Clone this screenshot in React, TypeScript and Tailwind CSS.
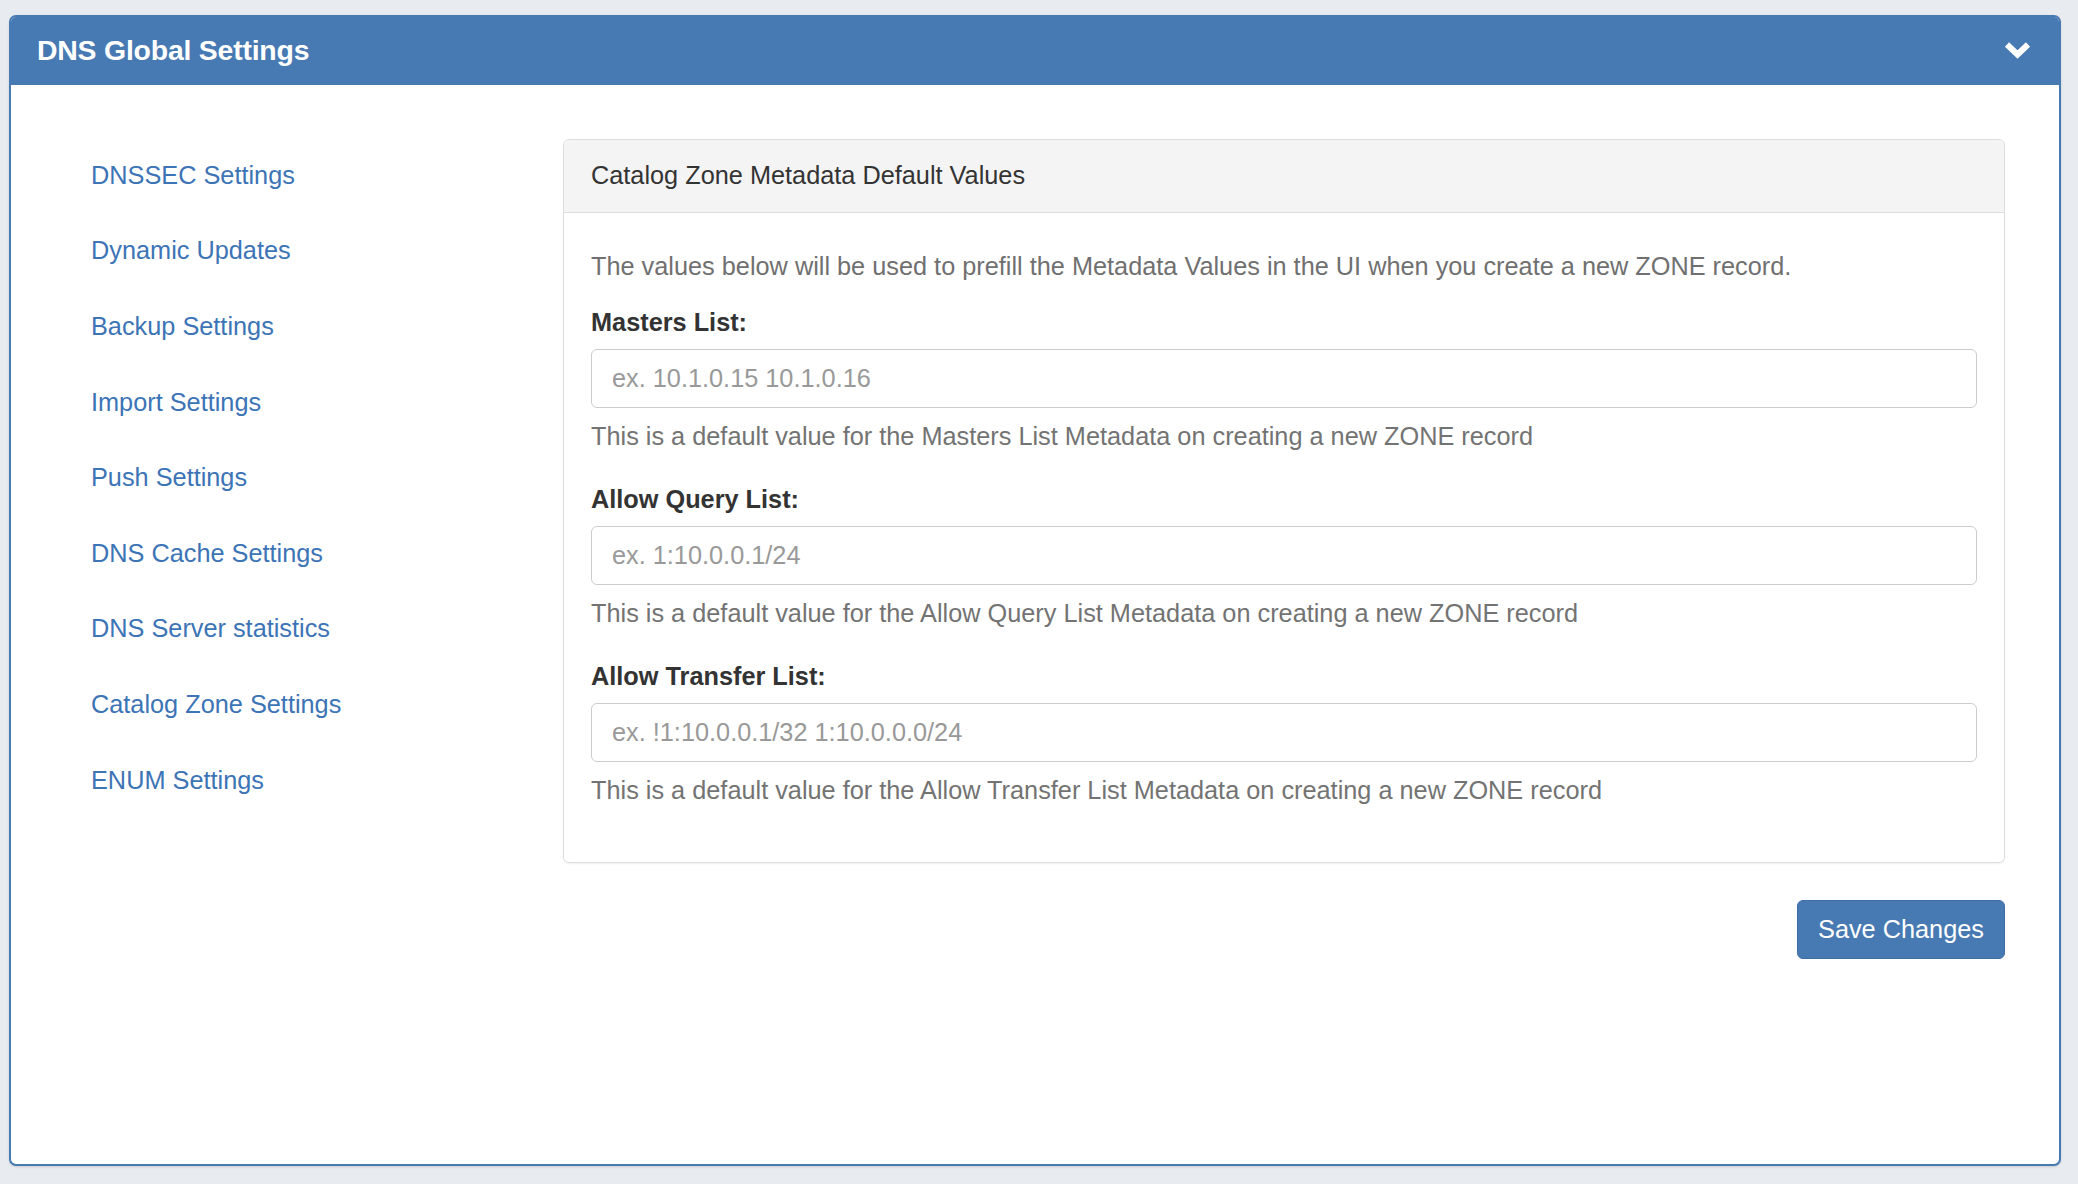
import { useState } from 'react';

const navItems = [
  'DNSSEC Settings',
  'Dynamic Updates',
  'Backup Settings',
  'Import Settings',
  'Push Settings',
  'DNS Cache Settings',
  'DNS Server statistics',
  'Catalog Zone Settings',
  'ENUM Settings',
];

const fields = [
  {
    label: 'Masters List:',
    placeholder: 'ex. 10.1.0.15 10.1.0.16',
    help: 'This is a default value for the Masters List Metadata on creating a new ZONE record',
  },
  {
    label: 'Allow Query List:',
    placeholder: 'ex. 1:10.0.0.1/24',
    help: 'This is a default value for the Allow Query List Metadata on creating a new ZONE record',
  },
  {
    label: 'Allow Transfer List:',
    placeholder: 'ex. !1:10.0.0.1/32 1:10.0.0.0/24',
    help: 'This is a default value for the Allow Transfer List Metadata on creating a new ZONE record',
  },
];

function Chevron() {
  return (
    <svg width="27" height="19" viewBox="0 0 27 19" fill="none">
      <polyline points="3,4.5 13.5,14.5 24,4.5" stroke="#ffffff" strokeWidth="6" strokeLinejoin="miter" />
    </svg>
  );
}

export default function App() {
  const [values, setValues] = useState<string[]>(['', '', '']);

  return (
    <div
      className="h-screen w-full bg-[#e8ecf0] pl-[9px] pt-[15px] pr-[17px] pb-[18px] flex"
      style={{ fontFamily: '"Liberation Sans", Arial, sans-serif' }}
    >
      <div className="flex-1 flex flex-col bg-white border-2 border-[#4779b2] rounded-[7px] overflow-hidden shadow-sm">
        {/* panel header */}
        <div className="h-[68px] shrink-0 bg-[#4779b2] flex items-center justify-between pl-[26px] pr-[28px]">
          <h1 className="text-[28.4px] font-bold text-white tracking-[-0.2px] -mt-[1px]">DNS Global Settings</h1>
          <button className="flex items-center -mt-[4px]">
            <Chevron />
          </button>
        </div>

        {/* panel body */}
        <div className="flex-1 flex pl-[80px] pr-[54px] pt-[53px]">
          <nav className="w-[472px] shrink-0 flex flex-col">
            {navItems.map((item) => (
              <a
                key={item}
                href="#"
                className="h-[75.6px] flex items-center text-[25.3px] text-[#3c74b6] hover:underline"
              >
                {item}
              </a>
            ))}
          </nav>

          <div className="flex-1 flex flex-col pt-[1px]">
            <div className="border border-[#dddddd] rounded-[6px] shadow-[0_1px_2px_rgba(0,0,0,0.06)]">
              <div className="h-[73px] bg-[#f4f4f4] border-b border-[#dddddd] rounded-t-[6px] flex items-center px-[27px] text-[25.3px] text-[#333333]">
                Catalog Zone Metadata Default Values
              </div>
              <div className="px-[27px] pt-[36px] pb-[55px]">
                <p className="leading-[34px] text-[25.3px] text-[#707070] mb-[22px]">
                  The values below will be used to prefill the Metadata Values in the UI when you create a new ZONE record.
                </p>
                {fields.map((f, i) => (
                  <div key={f.label} className={i < fields.length - 1 ? 'mb-[29px]' : ''}>
                    <label className="block leading-[34px] text-[25.3px] font-bold text-[#333333] mb-[10px]">
                      {f.label}
                    </label>
                    <input
                      type="text"
                      value={values[i]}
                      onChange={(e) => {
                        const next = [...values];
                        next[i] = e.target.value;
                        setValues(next);
                      }}
                      placeholder={f.placeholder}
                      className="w-full h-[59px] border border-[#cccccc] rounded-[6px] px-[20px] text-[25.3px] text-[#555555] placeholder:text-[#999999] outline-none focus:border-[#66afe9]"
                    />
                    <p className="mt-[11px] leading-[34px] text-[25.3px] text-[#737373]">{f.help}</p>
                  </div>
                ))}
              </div>
            </div>

            <div className="flex justify-end mt-[37px]">
              <button className="h-[59px] w-[208px] bg-[#4779b2] border border-[#3f6ea5] rounded-[6px] text-white text-[25.3px]">
                Save Changes
              </button>
            </div>
          </div>
        </div>
      </div>
    </div>
  );
}
